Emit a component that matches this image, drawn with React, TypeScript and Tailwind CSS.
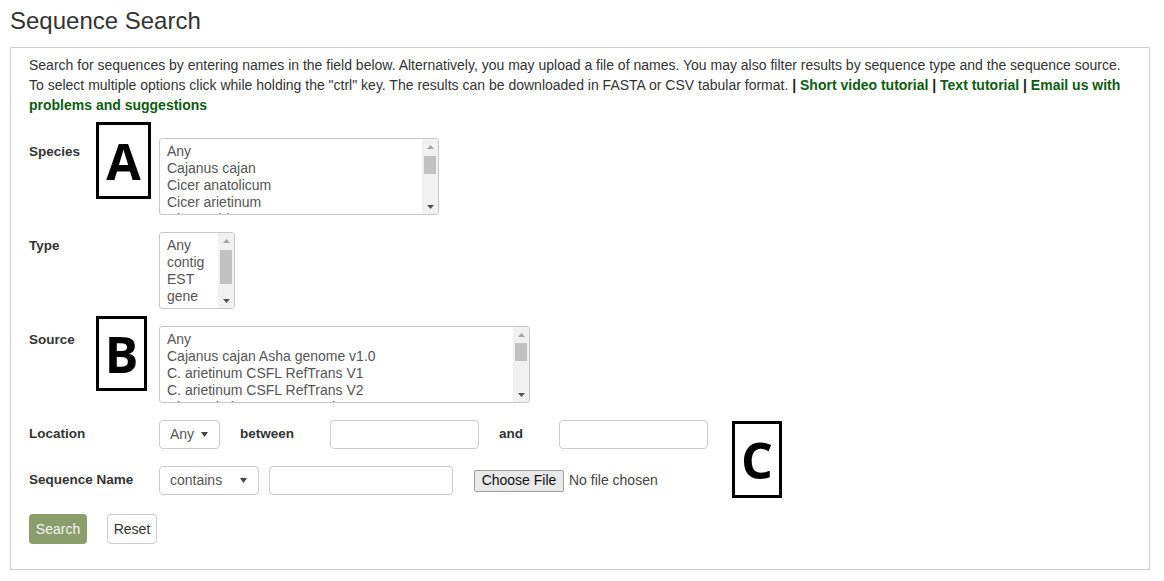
import React from "react";

function Arrow({ up, color }: { up?: boolean; color: string }) {
  return (
    <svg width="7" height="4" viewBox="0 0 7 4">
      {up ? <polygon points="0,4 7,4 3.5,0" fill={color} /> : <polygon points="0,0 7,0 3.5,4" fill={color} />}
    </svg>
  );
}

function MultiSelect({
  width,
  items,
  thumbTop,
  thumbH,
}: {
  width: number;
  items: string[];
  thumbTop: number;
  thumbH: number;
}) {
  return (
    <div
      className="relative h-[77px] overflow-hidden rounded-[3px] border border-[#c8c8c8] bg-white"
      style={{ width }}
    >
      <div className="pl-[7px] pt-[4px] text-[14px] leading-[17px] text-[#555]">
        {items.map((it) => (
          <div key={it} className="whitespace-nowrap">
            {it}
          </div>
        ))}
      </div>
      <div className="absolute right-0 top-0 bottom-0 w-[16px] bg-[#f1f1f1]">
        <div className="flex h-[15px] items-center justify-center">
          <Arrow up color="#a3a3a3" />
        </div>
        <div
          className="absolute left-[2px] right-[2px] bg-[#c1c1c1]"
          style={{ top: thumbTop, height: thumbH }}
        />
        <div className="absolute bottom-0 left-0 right-0 flex h-[15px] items-center justify-center">
          <Arrow color="#505050" />
        </div>
      </div>
    </div>
  );
}

function Dropdown({ width, text }: { width: number; text: string }) {
  return (
    <div
      className="flex h-[29px] items-center justify-between rounded-[4px] border border-[#ccc] bg-white pl-[10px] pr-[11px] text-[14px] text-[#555]"
      style={{ width }}
    >
      <span>{text}</span>
      <svg width="7" height="5" viewBox="0 0 7 5">
        <polygon points="0,0 7,0 3.5,5" fill="#444" />
      </svg>
    </div>
  );
}

function TextInput({ width }: { width: number }) {
  return <div className="h-[29px] rounded-[4px] border border-[#ccc] bg-white" style={{ width }} />;
}

function Box({ left, top, w, h, letter }: { left: number; top: number; w: number; h: number; letter: string }) {
  return (
    <div
      className="absolute flex items-center justify-center border-[3px] border-black bg-white text-[50px] font-bold leading-none text-black"
      style={{ left, top, width: w, height: h, fontFamily: '"Open Sans", sans-serif' }}
    >
      {letter}
    </div>
  );
}

export default function App() {
  const label = "w-[130px] shrink-0 text-[13.5px] font-bold text-[#333]";
  return (
    <div
      className="relative h-[581px] w-[1164px] bg-white"
      style={{ fontFamily: '"Liberation Sans", Arial, sans-serif' }}
    >
      <div className="h-[47px] pl-[10px] pt-[8px] text-[24px] leading-[26px] text-[#333]">Sequence Search</div>
      <div className="ml-[10px] w-[1140px] border border-[#cfcfcf] pb-[25px] pl-[18px] pr-[18px] pt-[7px]">
        <p className="text-[14px] leading-[20px] text-[#333]">
          Search for sequences by entering names in the field below. Alternatively, you may upload a file of names. You may also filter results by sequence type and the sequence source.
          <br />
          To select multiple options click while holding the "ctrl" key. The results can be downloaded in FASTA or CSV tabular format.{" "}
          <b className="text-[#222]">|</b> <b className="text-[#0d5c10]">Short video tutorial</b>{" "}
          <b className="text-[#222]">|</b> <b className="text-[#0d5c10]">Text tutorial</b>{" "}
          <b className="text-[#222]">|</b> <b className="text-[#0d5c10]">Email us with</b>
          <br />
          <b className="text-[#0d5c10]">problems and suggestions</b>
        </p>

        <div className="mt-[23px] flex flex-col gap-[17px]">
          <div className="flex">
            <div className={label + " pt-[5px] leading-[17px]"}>Species</div>
            <MultiSelect
              width={280}
              items={["Any", "Cajanus cajan", "Cicer anatolicum", "Cicer arietinum", "Cicer cubitum"]}
              thumbTop={17}
              thumbH={18}
            />
          </div>
          <div className="flex">
            <div className={label + " pt-[5px] leading-[17px]"}>Type</div>
            <MultiSelect width={76} items={["Any", "contig", "EST", "gene", "mRNA"]} thumbTop={17} thumbH={34} />
          </div>
          <div className="flex">
            <div className={label + " pt-[5px] leading-[17px]"}>Source</div>
            <MultiSelect
              width={371}
              items={[
                "Any",
                "Cajanus cajan Asha genome v1.0",
                "C. arietinum CSFL RefTrans V1",
                "C. arietinum CSFL RefTrans V2",
                "Cicer arietinum CDC Frontier genome v1.0",
              ]}
              thumbTop={16}
              thumbH={18}
            />
          </div>
          <div className="flex items-center">
            <div className={label}>Location</div>
            <Dropdown width={61} text="Any" />
            <div className="ml-[20px] w-[90px] text-[13.5px] font-bold text-[#333]">between</div>
            <TextInput width={149} />
            <div className="ml-[20px] w-[60px] text-[13.5px] font-bold text-[#333]">and</div>
            <TextInput width={149} />
          </div>
          <div className="flex items-center">
            <div className={label}>Sequence Name</div>
            <Dropdown width={100} text="contains" />
            <div className="ml-[10px]">
              <TextInput width={184} />
            </div>
            <div className="ml-[21px] flex h-[22px] w-[90px] items-center justify-center rounded-[2px] border border-[#a0a0a0] bg-[#e9e9e9] text-[14px] text-[#111]">
              Choose File
            </div>
            <div className="ml-[5px] text-[14px] text-[#444]">No file chosen</div>
          </div>
        </div>

        <div className="mt-[19px] flex gap-[20px]">
          <div className="flex h-[30px] w-[58px] items-center justify-center rounded-[4px] bg-[#8c9d6c] text-[14px] text-[#f4f4f4]">
            Search
          </div>
          <div className="flex h-[30px] w-[50px] items-center justify-center rounded-[4px] border border-[#ccc] bg-white text-[14px] text-[#333]">
            Reset
          </div>
        </div>
      </div>

      <Box left={96} top={122} w={55} h={77} letter="A" />
      <Box left={96} top={316} w={51} h={75} letter="B" />
      <Box left={732} top={421} w={50} h={77} letter="C" />
    </div>
  );
}
